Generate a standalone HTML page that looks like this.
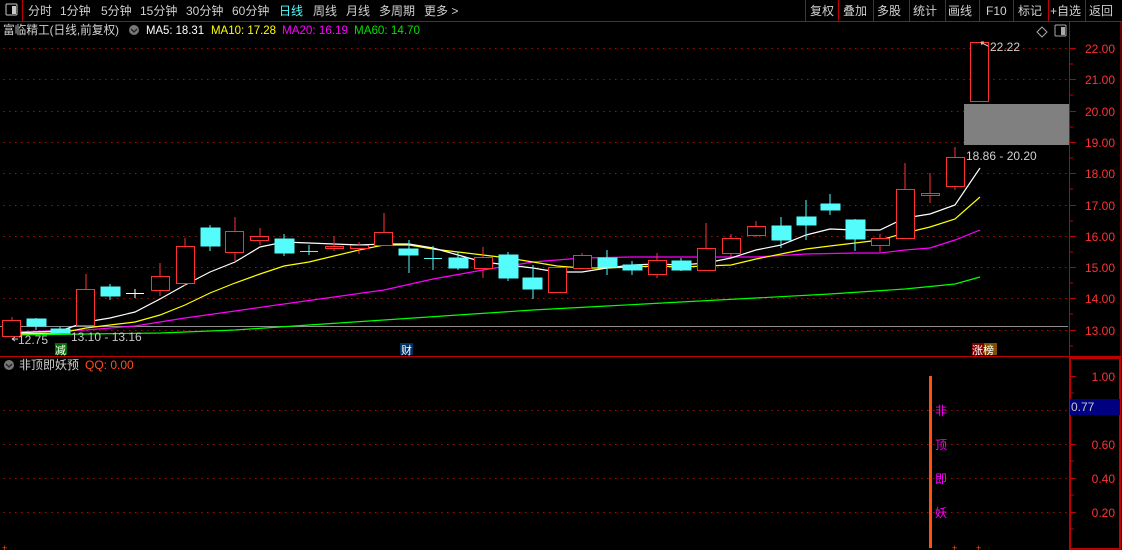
<!DOCTYPE html>
<html><head><meta charset="utf-8"><style>
html,body{margin:0;padding:0;background:#000;width:1122px;height:550px;overflow:hidden}
svg{display:block}
text{font-family:"Liberation Sans","Noto Sans CJK SC",sans-serif}
</style></head><body>
<svg width="1122" height="550" viewBox="0 0 1122 550" xmlns="http://www.w3.org/2000/svg">
<!-- toolbar -->
<rect x="0" y="0" width="1122" height="21" fill="#000"/>
<line x1="0" y1="21.5" x2="1122" y2="21.5" stroke="#c00000"/>
<line x1="22.5" y1="0" x2="22.5" y2="21" stroke="#c00000"/>
<rect x="6" y="4" width="11" height="11" rx="1" fill="none" stroke="#c8c8c8"/>
<rect x="12" y="6" width="4" height="8" fill="#c8c8c8"/>
<g font-size="12" fill="#d0d0d0">
<text x="28" y="15">分时</text><text x="60" y="15">1分钟</text><text x="101" y="15">5分钟</text>
<text x="140" y="15">15分钟</text><text x="186" y="15">30分钟</text><text x="232" y="15">60分钟</text>
<text x="279" y="15" fill="#54fcfc">日线</text><text x="313" y="15">周线</text><text x="346" y="15">月线</text>
<text x="379" y="15">多周期</text><text x="424" y="15">更多 &gt;</text>
<text x="810" y="15">复权</text><text x="843" y="15">叠加</text><text x="877" y="15">多股</text>
<text x="913" y="15">统计</text><text x="948" y="15">画线</text><text x="986" y="15">F10</text>
<text x="1018" y="15">标记</text><text x="1050" y="15">+自选</text><text x="1089" y="15">返回</text>
</g>
<g stroke="#c00000">
<line x1="805.5" y1="0" x2="805.5" y2="21"/><line x1="838.5" y1="0" x2="838.5" y2="21"/>
<line x1="873.5" y1="0" x2="873.5" y2="21"/><line x1="909.5" y1="0" x2="909.5" y2="21"/>
<line x1="945.5" y1="0" x2="945.5" y2="21"/><line x1="979.5" y1="0" x2="979.5" y2="21"/>
<line x1="1013.5" y1="0" x2="1013.5" y2="21"/><line x1="1048.5" y1="0" x2="1048.5" y2="21"/>
<line x1="1085.5" y1="0" x2="1085.5" y2="21"/>
</g>
<!-- title -->
<text x="3" y="34" font-size="12" fill="#d0d0d0" textLength="116" lengthAdjust="spacingAndGlyphs">富临精工(日线,前复权)</text>
<circle cx="134" cy="30" r="5" fill="#777"/><path d="M131 29l3 3 3-3" stroke="#222" fill="none" stroke-width="1.3"/>
<g font-size="12"><text x="146" y="34" fill="#fff" textLength="58" lengthAdjust="spacingAndGlyphs">MA5: 18.31</text>
<text x="211" y="34" fill="#ffff00" textLength="65" lengthAdjust="spacingAndGlyphs">MA10: 17.28</text>
<text x="282" y="34" fill="#ff00ff" textLength="66" lengthAdjust="spacingAndGlyphs">MA20: 16.19</text>
<text x="354" y="34" fill="#00e000" textLength="66" lengthAdjust="spacingAndGlyphs">MA60: 14.70</text></g>
<path d="M1042 27l5 5-5 5-5-5z" fill="none" stroke="#aaa"/>
<rect x="1055" y="25" width="11" height="11" rx="1" fill="none" stroke="#aaa"/><rect x="1061" y="27" width="4" height="8" fill="#aaa"/>
<!-- grids -->
<g stroke="#c00000" stroke-dasharray="1.5,4.5">
<line x1="3" y1="48.5" x2="1068" y2="48.5"/><line x1="3" y1="79.5" x2="1068" y2="79.5"/>
<line x1="3" y1="111.5" x2="1068" y2="111.5"/><line x1="3" y1="142.5" x2="1068" y2="142.5"/>
<line x1="3" y1="173.5" x2="1068" y2="173.5"/><line x1="3" y1="205.5" x2="1068" y2="205.5"/>
<line x1="3" y1="236.5" x2="1068" y2="236.5"/><line x1="3" y1="267.5" x2="1068" y2="267.5"/>
<line x1="3" y1="298.5" x2="1068" y2="298.5"/><line x1="3" y1="330.5" x2="1068" y2="330.5"/>
<line x1="3" y1="410.5" x2="1068" y2="410.5"/><line x1="3" y1="444.5" x2="1068" y2="444.5"/>
<line x1="3" y1="478.5" x2="1068" y2="478.5"/><line x1="3" y1="512.5" x2="1068" y2="512.5"/>
</g>
<line x1="0" y1="326.5" x2="1068" y2="326.5" stroke="#909090"/>
<!-- axis -->
<line x1="1069.5" y1="22" x2="1069.5" y2="356" stroke="#c00000"/>
<line x1="0" y1="356.5" x2="1122" y2="356.5" stroke="#c00000"/>
<line x1="1121" y1="22" x2="1121" y2="550" stroke="#c00000"/>
<rect x="1070" y="358" width="50" height="191" fill="none" stroke="#c00000" stroke-width="2"/>
<g stroke="#c00000">
<path d="M1070 48.5h6M1070 64h3M1070 79.5h6M1070 95h3M1070 111.5h6M1070 127h3M1070 142.5h6M1070 158h3M1070 173.5h6M1070 189h3M1070 205.5h6M1070 221h3M1070 236.5h6M1070 252h3M1070 267.5h6M1070 283h3M1070 298.5h6M1070 314h3M1070 330.5h6M1070 346h3"/>
<path d="M1071 376.5h5M1071 393h3M1071 444.5h5M1071 461h3M1071 478.5h5M1071 495h3M1071 512.5h5M1071 529h3"/>
</g>
<g font-size="12" fill="#ff3232" text-anchor="end">
<text x="1115" y="53">22.00</text><text x="1115" y="84">21.00</text><text x="1115" y="116">20.00</text>
<text x="1115" y="147">19.00</text><text x="1115" y="178">18.00</text><text x="1115" y="210">17.00</text>
<text x="1115" y="241">16.00</text><text x="1115" y="272">15.00</text><text x="1115" y="303">14.00</text>
<text x="1115" y="335">13.00</text>
<text x="1115" y="381">1.00</text><text x="1115" y="449">0.60</text><text x="1115" y="483">0.40</text><text x="1115" y="517">0.20</text>
</g>
<rect x="1070" y="399" width="50" height="16" fill="#000080"/>
<text x="1071" y="411" font-size="12" fill="#c8c8c8">0.77</text>
<!-- gray box -->
<rect x="964" y="104" width="105" height="41" fill="#808080"/>
<!-- MAs -->
<g fill="none" stroke-width="1.2">
<polyline stroke="#00ff00" points="12,335 86,334 160,333 235,330 309,325 384,320 458,315 533,310 607,306 681,302 756,298 830,294 905,289 955,284 980,277"/>
<polyline stroke="#ff00ff" points="12,332 86,330 135,326 185,318 235,311 284,304 334,297 384,290 433,279 483,270 508,266 533,262 557,260 582,258 632,257 681,257 706,257 756,257 806,254 855,253 880,253 905,250 930,248 955,240 980,230"/>
<polyline stroke="#ffff00" points="12,334 60,333 86,328 110,325 135,322 160,315 185,305 210,293 235,283 260,274 284,266 309,262 334,256 359,250 384,245 409,245 433,249 458,252 483,255 508,258 533,262 557,266 582,268 607,268 632,267 657,266 681,267 706,266 731,265 756,259 781,254 806,249 830,246 855,243 880,240 905,233 930,227 955,219 980,197"/>
<polyline stroke="#ffffff" points="12,333 36,332 60,331 86,322 110,318 135,312 160,299 185,285 210,272 235,262 260,247 284,242 309,243 334,244 359,245 384,244 409,244 433,248 458,255 483,262 508,265 533,268 557,272 582,272 607,268 632,265 657,264 681,265 706,263 731,258 756,250 781,245 806,235 830,229 855,230 880,230 905,218 930,214 955,205 980,168"/>
</g>
<!-- candles red -->
<g stroke="#ff3232" fill="#000">
<path d="M12 317v3M86 274v15M160 263v13M160 290v6M185 238v8M185 283v3M235 217v14M235 252v10M260 228v8M260 240v5M334 236v10M334 248v3M359 242v3M359 248v6M384 213v19M483 247v10M483 268v10M582 253v2M657 253v7M657 274v4M706 223v25M731 234v4M731 253v4M756 221v5M756 235v2M880 234v4M880 245v7M905 163v26M930 173v20M930 195v8M955 147v10M955 186v4"/>
<rect x="2.5" y="320.5" width="18" height="16"/><rect x="76.5" y="289.5" width="18" height="36"/>
<rect x="151.5" y="276.5" width="18" height="14"/><rect x="176.5" y="246.5" width="18" height="37"/>
<rect x="225.5" y="231.5" width="18" height="21"/><rect x="250.5" y="236.5" width="18" height="4"/>
<rect x="325.5" y="246.5" width="18" height="2"/><rect x="350.5" y="245.5" width="18" height="3"/>
<rect x="374.5" y="232.5" width="18" height="13"/><rect x="474.5" y="257.5" width="18" height="11"/>
<rect x="548.5" y="267.5" width="18" height="25"/><rect x="573.5" y="255.5" width="18" height="13"/>
<rect x="648.5" y="260.5" width="18" height="14"/><rect x="697.5" y="248.5" width="18" height="22"/>
<rect x="722.5" y="238.5" width="18" height="15"/><rect x="747.5" y="226.5" width="18" height="9"/>
<rect x="871.5" y="238.5" width="18" height="7"/><rect x="896.5" y="189.5" width="18" height="49"/>
<rect x="921.5" y="193.5" width="18" height="2"/><rect x="946.5" y="157.5" width="18" height="29"/>
<rect x="970.5" y="42.5" width="18" height="59"/>
</g>
<!-- candles cyan -->
<g stroke="#54fcfc" fill="#54fcfc">
<path d="M36 318v12M60 327v6M110 284v16M210 225v26M284 234v22M409 240v33M458 252v18M508 252v29M533 265v34M607 250v25M632 261v14M681 258v13M781 217v31M806 200v40M830 194v21M855 219v32M300 251.5h18M309 245v10M424 258.5h18M433 246v24"/>
<rect x="27" y="319" width="19" height="7"/><rect x="51" y="329" width="19" height="4"/>
<rect x="101" y="287" width="19" height="9"/><rect x="201" y="228" width="19" height="18"/>
<rect x="275" y="239" width="19" height="14"/><rect x="399" y="249" width="19" height="6"/>
<rect x="449" y="258" width="19" height="10"/><rect x="499" y="255" width="19" height="23"/>
<rect x="523" y="278" width="19" height="11"/><rect x="598" y="258" width="19" height="9"/>
<rect x="623" y="265" width="19" height="5"/><rect x="672" y="261" width="19" height="9"/>
<rect x="772" y="226" width="19" height="14"/><rect x="797" y="217" width="19" height="8"/>
<rect x="821" y="204" width="19" height="6"/><rect x="846" y="220" width="19" height="19"/>
</g>
<path d="M126 293.5h18M135 289v9" stroke="#fff"/>
<!-- labels -->
<text x="990" y="51" font-size="12" fill="#d0d0d0">22.22</text>
<path d="M988 46l-6-3M981 42l3 0M981 42l1 3" stroke="#ccc" fill="none"/>
<text x="966" y="160" font-size="12" fill="#d0d0d0">18.86 - 20.20</text>
<text x="71" y="341" font-size="12" fill="#c8c8c8">13.10 - 13.16</text>
<text x="18" y="344" font-size="12" fill="#c8c8c8">12.75</text>
<path d="M12 339h6M12 339l3-2M12 339l3 2" stroke="#ccc" fill="none"/>
<rect x="55" y="343" width="12" height="12" fill="#007000"/><text x="55" y="354" font-size="11" fill="#fff">减</text>
<rect x="400" y="343" width="13" height="12" fill="#003060"/><text x="401" y="354" font-size="11" fill="#fff">财</text>
<rect x="972" y="343" width="12" height="12" fill="#800000"/><rect x="984" y="343" width="13" height="12" fill="#805000"/>
<text x="972" y="354" font-size="11" fill="#fff">涨榜</text>
<!-- lower panel -->
<circle cx="9" cy="365" r="5" fill="#777"/><path d="M6 364l3 3 3-3" stroke="#222" fill="none" stroke-width="1.3"/>
<text x="19" y="369" font-size="12" fill="#d0d0d0">非顶即妖预</text>
<text x="85" y="369" font-size="12" fill="#ff5020">QQ: 0.00</text>
<rect x="929" y="376" width="3" height="172" fill="#ff5010"/>
<g font-size="12" fill="#ff00ff"><text x="935" y="415">非</text><text x="935" y="449">顶</text><text x="935" y="483">即</text><text x="935" y="517">妖</text></g>
<g fill="#ff5010" font-size="9"><text x="2" y="551">+</text><text x="952" y="551">+</text><text x="976" y="551">+</text></g>
</svg>
</body></html>
